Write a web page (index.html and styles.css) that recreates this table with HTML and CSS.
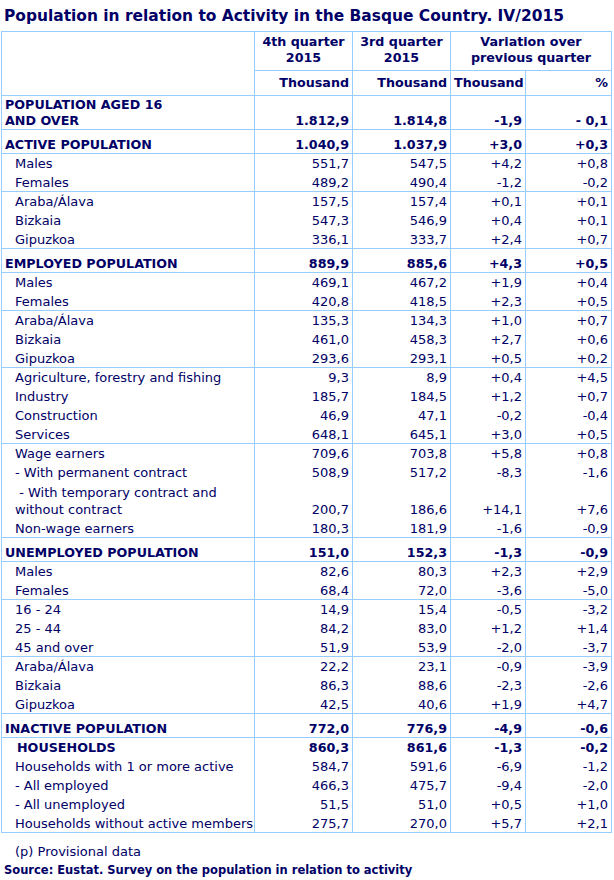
FILE: index.html
```html
<!DOCTYPE html>
<html lang="en">
<head>
<meta charset="utf-8">
<title>Population in relation to Activity in the Basque Country. IV/2015</title>
<link rel="stylesheet" href="styles.css">
</head>
<body>
<h1 class="title">Population in relation to Activity in the Basque Country. IV/2015</h1>
<table class="stats">
  <colgroup>
    <col class="c-label">
    <col class="c-num">
    <col class="c-num">
    <col class="c-var">
    <col class="c-pct">
  </colgroup>
  <thead>
    <tr class="hd1">
      <th rowspan="2"></th>
      <th>4th quarter<br>2015</th>
      <th>3rd quarter<br>2015</th>
      <th colspan="2">Variation over<br>previous quarter</th>
    </tr>
    <tr class="hd2">
      <th>Thousand</th>
      <th>Thousand</th>
      <th>Thousand</th>
      <th>%</th>
    </tr>
  </thead>
  <tbody>
    <tr class="pop"><td class="lbl">POPULATION AGED 16<br>AND OVER</td><td>1.812,9</td><td>1.814,8</td><td>-1,9</td><td>- 0,1</td></tr>

    <tr class="head"><td class="lbl">ACTIVE POPULATION</td><td>1.040,9</td><td>1.037,9</td><td>+3,0</td><td>+0,3</td></tr>
    <tr class="grp"><td class="lbl">Males</td><td>551,7</td><td>547,5</td><td>+4,2</td><td>+0,8</td></tr>
    <tr><td class="lbl">Females</td><td>489,2</td><td>490,4</td><td>-1,2</td><td>-0,2</td></tr>
    <tr class="grp"><td class="lbl">Araba/Álava</td><td>157,5</td><td>157,4</td><td>+0,1</td><td>+0,1</td></tr>
    <tr><td class="lbl">Bizkaia</td><td>547,3</td><td>546,9</td><td>+0,4</td><td>+0,1</td></tr>
    <tr><td class="lbl">Gipuzkoa</td><td>336,1</td><td>333,7</td><td>+2,4</td><td>+0,7</td></tr>

    <tr class="head"><td class="lbl">EMPLOYED POPULATION</td><td>889,9</td><td>885,6</td><td>+4,3</td><td>+0,5</td></tr>
    <tr class="grp"><td class="lbl">Males</td><td>469,1</td><td>467,2</td><td>+1,9</td><td>+0,4</td></tr>
    <tr><td class="lbl">Females</td><td>420,8</td><td>418,5</td><td>+2,3</td><td>+0,5</td></tr>
    <tr class="grp"><td class="lbl">Araba/Álava</td><td>135,3</td><td>134,3</td><td>+1,0</td><td>+0,7</td></tr>
    <tr><td class="lbl">Bizkaia</td><td>461,0</td><td>458,3</td><td>+2,7</td><td>+0,6</td></tr>
    <tr><td class="lbl">Gipuzkoa</td><td>293,6</td><td>293,1</td><td>+0,5</td><td>+0,2</td></tr>
    <tr class="grp"><td class="lbl">Agriculture, forestry and fishing</td><td>9,3</td><td>8,9</td><td>+0,4</td><td>+4,5</td></tr>
    <tr><td class="lbl">Industry</td><td>185,7</td><td>184,5</td><td>+1,2</td><td>+0,7</td></tr>
    <tr><td class="lbl">Construction</td><td>46,9</td><td>47,1</td><td>-0,2</td><td>-0,4</td></tr>
    <tr><td class="lbl">Services</td><td>648,1</td><td>645,1</td><td>+3,0</td><td>+0,5</td></tr>
    <tr class="grp"><td class="lbl">Wage earners</td><td>709,6</td><td>703,8</td><td>+5,8</td><td>+0,8</td></tr>
    <tr><td class="lbl">- With permanent contract</td><td>508,9</td><td>517,2</td><td>-8,3</td><td>-1,6</td></tr>
    <tr class="two"><td class="lbl">&nbsp;- With temporary contract and<br>without contract</td><td>200,7</td><td>186,6</td><td>+14,1</td><td>+7,6</td></tr>
    <tr><td class="lbl">Non-wage earners</td><td>180,3</td><td>181,9</td><td>-1,6</td><td>-0,9</td></tr>

    <tr class="head"><td class="lbl">UNEMPLOYED POPULATION</td><td>151,0</td><td>152,3</td><td>-1,3</td><td>-0,9</td></tr>
    <tr class="grp"><td class="lbl">Males</td><td>82,6</td><td>80,3</td><td>+2,3</td><td>+2,9</td></tr>
    <tr><td class="lbl">Females</td><td>68,4</td><td>72,0</td><td>-3,6</td><td>-5,0</td></tr>
    <tr class="grp"><td class="lbl">16 - 24</td><td>14,9</td><td>15,4</td><td>-0,5</td><td>-3,2</td></tr>
    <tr><td class="lbl">25 - 44</td><td>84,2</td><td>83,0</td><td>+1,2</td><td>+1,4</td></tr>
    <tr><td class="lbl">45 and over</td><td>51,9</td><td>53,9</td><td>-2,0</td><td>-3,7</td></tr>
    <tr class="grp"><td class="lbl">Araba/Álava</td><td>22,2</td><td>23,1</td><td>-0,9</td><td>-3,9</td></tr>
    <tr><td class="lbl">Bizkaia</td><td>86,3</td><td>88,6</td><td>-2,3</td><td>-2,6</td></tr>
    <tr><td class="lbl">Gipuzkoa</td><td>42,5</td><td>40,6</td><td>+1,9</td><td>+4,7</td></tr>

    <tr class="head"><td class="lbl">INACTIVE POPULATION</td><td>772,0</td><td>776,9</td><td>-4,9</td><td>-0,6</td></tr>
    <tr class="grp hh"><td class="lbl">HOUSEHOLDS</td><td>860,3</td><td>861,6</td><td>-1,3</td><td>-0,2</td></tr>
    <tr><td class="lbl">Households with 1 or more active</td><td>584,7</td><td>591,6</td><td>-6,9</td><td>-1,2</td></tr>
    <tr><td class="lbl">- All employed</td><td>466,3</td><td>475,7</td><td>-9,4</td><td>-2,0</td></tr>
    <tr><td class="lbl">- All unemployed</td><td>51,5</td><td>51,0</td><td>+0,5</td><td>+1,0</td></tr>
    <tr class="last"><td class="lbl">Households without active members</td><td>275,7</td><td>270,0</td><td>+5,7</td><td>+2,1</td></tr>
  </tbody>
</table>
<p class="note">(p) Provisional data</p>
<p class="source">Source: Eustat. Survey on the population in relation to activity</p>
</body>
</html>
```

FILE: styles.css
```css
body {
  margin: 0;
  background: #ffffff;
  color: #000066;
  font-family: "DejaVu Sans", Verdana, sans-serif;
  font-size: 13px;
}

.title {
  margin: 0;
  padding: 4px 0 0 4px;
  height: 27px;
  font-size: 15.45px;
  line-height: 24px;
  font-weight: bold;
  color: #000066;
}

.stats {
  margin-left: 1px;
  width: 611px;
  table-layout: fixed;
  border-collapse: separate;
  border-spacing: 0;
  border-left: 1px solid #99ccff;
  border-top: 1px solid #99ccff;
}

.c-label { width: 253px; }
.c-num { width: 98px; }
.c-var { width: 75px; }
.c-pct { width: 86px; }

.stats th,
.stats td {
  border-right: 1px solid #99ccff;
  padding: 3px 3px 0 3px;
  line-height: 16px;
  vertical-align: bottom;
  text-align: right;
  white-space: nowrap;
  font-weight: normal;
  color: #000066;
}

.stats thead th {
  font-weight: bold;
  font-size: 12.7px;
  border-bottom: 1px solid #99ccff;
}

.hd1 th {
  padding: 2px 3px 4px;
  vertical-align: middle;
  text-align: center;
}

.hd2 th {
  padding: 4px 3px;
  vertical-align: middle;
  text-align: right;
}

.stats td.lbl {
  text-align: left;
  padding-left: 13px;
}

.stats tr.grp td {
  border-top: 1px solid #99ccff;
  padding-top: 2px;
}

.stats tr.head td {
  border-top: 1px solid #99ccff;
  padding-top: 7px;
  font-weight: bold;
  font-size: 12.7px;
}

.stats tr.head td.lbl,
.stats tr.pop td.lbl {
  padding-left: 3px;
}

.stats tr.pop td {
  padding-top: 1px;
  padding-bottom: 0;
  font-weight: bold;
  font-size: 12.7px;
}

.stats tr.two td {
  line-height: 17px;
  padding-top: 3px;
  padding-bottom: 0;
}

.stats tr.hh td {
  font-weight: bold;
  font-size: 12.7px;
}

.stats tr.hh td.lbl {
  padding-left: 15px;
}

.stats tr.last td {
  border-bottom: 1px solid #99ccff;
}

.note {
  margin: 0;
  padding: 11px 0 0 15px;
  line-height: 16px;
}

.source {
  margin: 0;
  padding: 1px 0 0 4px;
  line-height: 18px;
  font-weight: bold;
  font-size: 11.5px;
}
```
